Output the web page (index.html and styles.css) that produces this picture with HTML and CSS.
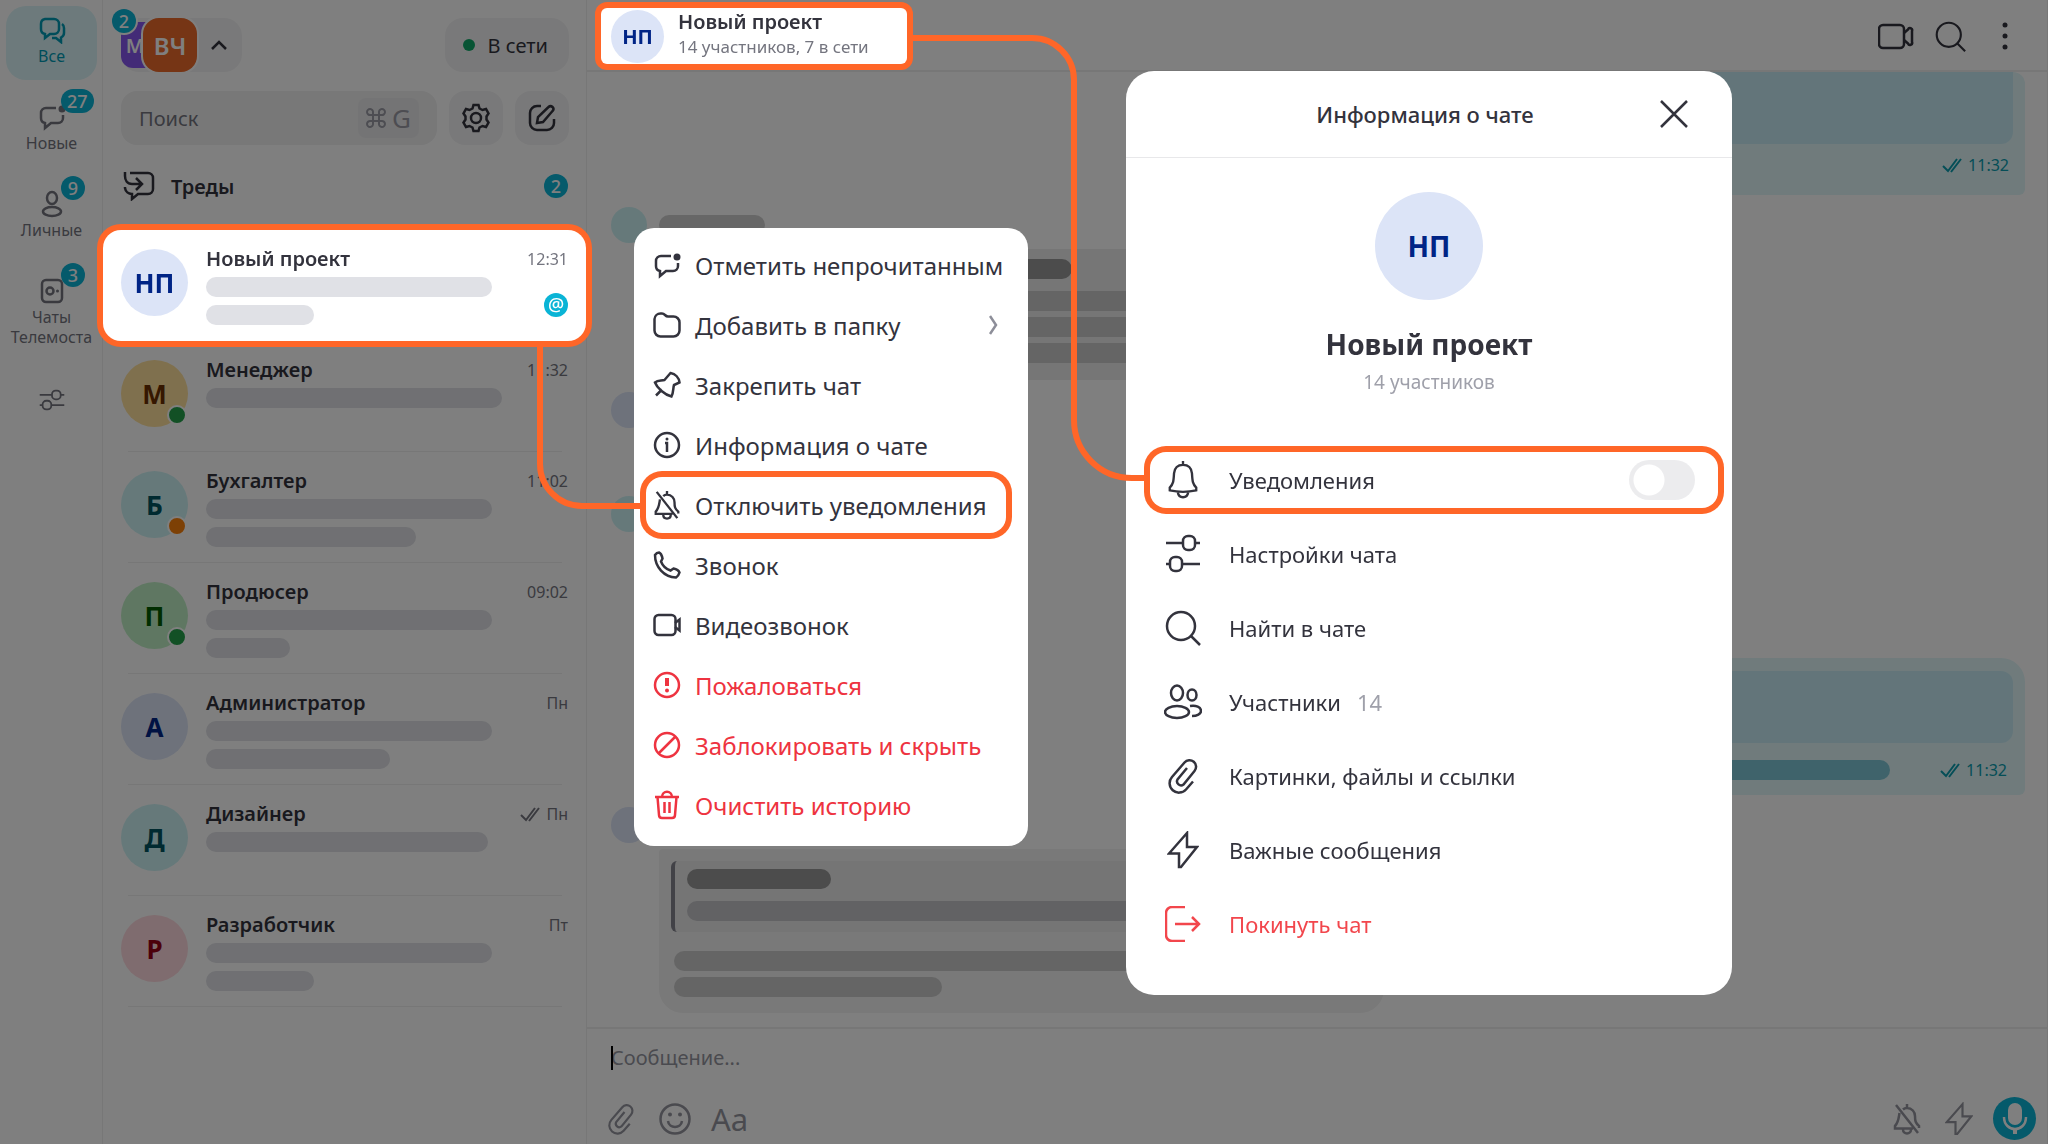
FILE: index.html
```html
<!DOCTYPE html>
<html lang="ru">
  <head>
    <meta charset="utf-8">
    <meta name="viewport" content="width=device-width, initial-scale=1">
    <title>Новый проект</title>
    <link rel="stylesheet" href="styles.css">
  </head>

  <body>

    <!-- icons used more than once -->
    <svg class="sprite" aria-hidden="true">
      <symbol id="i-unread" viewBox="0 0 28 28"><path d="M18 5H8a5 5 0 0 0-5 5v5a5 5 0 0 0 4 5v5l6-5h7a5 5 0 0 0 5-5v-3"/><circle class="fill" cx="24" cy="6" r="3.5"/></symbol>
      <symbol id="i-sliders" viewBox="0 0 36 36"><path d="M1 11h17M30 11h5M1 25h4M17 25h18"/><rect x="18" y="5" width="12" height="12" rx="5"/><rect x="5" y="19" width="12" height="12" rx="5"/></symbol>
      <symbol id="i-search" viewBox="0 0 36 36"><circle cx="16" cy="16" r="14"/><path d="M26 26l9 9"/></symbol>
      <symbol id="i-video" viewBox="0 0 36 28"><rect x="1" y="3" width="25" height="23" rx="4"/><path d="M26 11l4-3.500a2 2 0 0 1 4 1.500v11a2 2 0 0 1-4 1.500L26 18"/></symbol>
      <symbol id="i-clip" viewBox="0 0 32 36"><path d="M20 10L10.500 21.500a4 4 0 0 0 6 5L27.500 13a6.500 6.500 0 0 0-10-8.500L5 19a9.300 9.300 0 0 0 14 12.500l7-8"/></symbol>
      <symbol id="i-bolt" viewBox="0 0 32 38"><path d="M20 2L2 22.500h10V36h2L30 16H20z"/></symbol>
      <symbol id="i-bell-off" viewBox="0 0 28 32"><path d="M14 1v4M10 6.500C11 5.500 12.500 5 14 5c5 0 8 4 8 8 0 5 .500 7 4 10v2M6.500 10C5.500 16 5.500 19.500 2 23v2.500h18M10 26.500c0 2.500 1.800 4 4 4s4-1.500 4-4M3 2l22 28"/></symbol>
      <symbol id="i-checks" viewBox="0 0 20 16"><path d="M1 9l5 5L15 2M9 15L19 2"/></symbol>
    </svg>

    <div class="app">

      <nav class="rail">
        <a class="rail-item active" href="#">
          <svg class="icon" width="28" height="28" viewBox="0 0 28 28"><path d="M7 3h9a5 5 0 0 1 5 5v5a5 5 0 0 1-5 5h-4l-5 4v-4a5 5 0 0 1-4-5V8a5 5 0 0 1 4-5z"/><path d="M24 8c1.500 1 2 2.500 2 4v5c0 2-1 3.500-3 4.500V26l-5-4h-4"/></svg>
          <span>Все</span>
        </a>
        <a class="rail-item" href="#">
          <svg class="icon" width="28" height="28"><use href="#i-unread"/></svg>
          <span>Новые</span>
          <b class="badge">27</b>
        </a>
        <a class="rail-item" href="#">
          <svg class="icon" width="28" height="28" viewBox="0 0 28 28"><ellipse cx="14" cy="8" rx="5" ry="6"/><ellipse cx="14" cy="21.500" rx="9" ry="4.500"/></svg>
          <span>Личные</span>
          <b class="badge">9</b>
        </a>
        <a class="rail-item" href="#">
          <svg class="icon" width="28" height="28" viewBox="0 0 28 28"><rect x="4" y="3" width="20" height="22" rx="4"/><circle cx="12" cy="14" r="3.500"/><circle class="fill" cx="19.500" cy="14" r="1.500"/></svg>
          <span>Чаты<br>Телемоста</span>
          <b class="badge">3</b>
        </a>
        <a class="rail-item" href="#" aria-label="Настройка папок">
          <svg class="icon" width="26" height="28"><use href="#i-sliders"/></svg>
        </a>
      </nav>

      <aside class="sidebar">
        <div class="top-row">
          <button class="accounts" type="button">
            <span class="account second">М</span>
            <span class="account first">ВЧ</span>
            <svg class="icon" width="18" height="12" viewBox="0 0 18 12"><path d="M2 10l7-7 7 7"/></svg>
            <b class="badge">2</b>
          </button>
          <button class="status" type="button"><i class="status-dot"></i>В сети</button>
        </div>

        <div class="search-row">
          <label class="search">
            <input type="text" placeholder="Поиск" aria-label="Поиск">
            <kbd><svg class="icon" width="20" height="20" viewBox="0 0 20 20"><path d="M7 7h6v6H7zM7 7H4.500A3 3 0 1 1 7 4.500zM13 7V4.500A3 3 0 1 1 15.500 7zM13 13h2.500a3 3 0 1 1-2.500 2.500zM7 13v2.500A3 3 0 1 1 4.500 13z"/></svg>G</kbd>
          </label>
          <button class="square" type="button" aria-label="Настройки">
            <svg class="icon" width="30" height="30" viewBox="0 0 30 30"><path d="M12.500 2h5l1 3.500 3 1.500 3.500-1 2.500 4.500-2 3v3l2 3-2.500 4.500-3.500-1-3 1.500-1 3.500h-5l-1-3.500-3-1.500-3.500 1L2.500 19.500l2-3v-3l-2-3L5 6l3.500 1 3-1.500z"/><circle cx="15" cy="15" r="5"/></svg>
          </button>
          <button class="square" type="button" aria-label="Новый чат">
            <svg class="icon" width="28" height="28" viewBox="0 0 28 28"><path d="M13 2H9a7 7 0 0 0-7 7v10a7 7 0 0 0 7 7h10a7 7 0 0 0 7-7v-4"/><path d="M9 19l1-6L20.500 3a2.500 2.500 0 0 1 4 4L15 18z"/></svg>
          </button>
        </div>

        <a class="threads" href="#">
          <svg class="icon" width="32" height="30" viewBox="0 0 32 30"><path d="M7 2h18a5 5 0 0 1 5 5v11a5 5 0 0 1-5 5H15l-6 5v-5a7 7 0 0 1-7-6v-1M2 1v4c0 4 2 8 7 8h10M13 7l6 6-6 6"/></svg>
          <span>Треды</span>
          <b class="badge">2</b>
        </a>

        <ul class="chats">
          <li>
            <a class="chat-row lifted" href="#">
              <span class="avatar blue">НП</span>
              <span class="chat-text">
                <strong>Новый проект</strong>
                <i class="bar w-286"></i>
                <i class="bar w-108"></i>
              </span>
              <span class="chat-meta"><time>12:31</time><b class="badge mention">@</b></span>
            </a>
          </li>
          <li>
            <a class="chat-row" href="#">
              <span class="avatar yellow">М<i class="presence green-dot"></i></span>
              <span class="chat-text">
                <strong>Менеджер</strong>
                <i class="bar w-296"></i>
              </span>
              <span class="chat-meta"><time>11:32</time></span>
            </a>
          </li>
          <li>
            <a class="chat-row" href="#">
              <span class="avatar teal">Б<i class="presence orange-dot"></i></span>
              <span class="chat-text">
                <strong>Бухгалтер</strong>
                <i class="bar w-286"></i>
                <i class="bar w-210"></i>
              </span>
              <span class="chat-meta"><time>11:02</time></span>
            </a>
          </li>
          <li>
            <a class="chat-row" href="#">
              <span class="avatar green">П<i class="presence green-dot"></i></span>
              <span class="chat-text">
                <strong>Продюсер</strong>
                <i class="bar w-286"></i>
                <i class="bar w-84"></i>
              </span>
              <span class="chat-meta"><time>09:02</time></span>
            </a>
          </li>
          <li>
            <a class="chat-row" href="#">
              <span class="avatar blue">А</span>
              <span class="chat-text">
                <strong>Администратор</strong>
                <i class="bar w-286"></i>
                <i class="bar w-184"></i>
              </span>
              <span class="chat-meta"><time>Пн</time></span>
            </a>
          </li>
          <li>
            <a class="chat-row" href="#">
              <span class="avatar teal">Д</span>
              <span class="chat-text">
                <strong>Дизайнер</strong>
                <i class="bar w-282"></i>
              </span>
              <span class="chat-meta"><time><svg class="icon" width="20" height="16"><use href="#i-checks"/></svg>Пн</time></span>
            </a>
          </li>
          <li>
            <a class="chat-row" href="#">
              <span class="avatar red">Р</span>
              <span class="chat-text">
                <strong>Разработчик</strong>
                <i class="bar w-286"></i>
                <i class="bar w-108"></i>
              </span>
              <span class="chat-meta"><time>Пт</time></span>
            </a>
          </li>
        </ul>
      </aside>

      <main class="chat">
        <header class="chat-header">
          <a class="peer lifted" href="#">
            <span class="avatar blue small">НП</span>
            <span class="peer-text">
              <strong>Новый проект</strong>
              <span>14 участников, 7 в сети</span>
            </span>
          </a>
          <div class="header-tools">
            <button type="button" aria-label="Видеозвонок"><svg class="icon" width="36" height="28"><use href="#i-video"/></svg></button>
            <button type="button" aria-label="Поиск"><svg class="icon" width="31" height="31"><use href="#i-search"/></svg></button>
            <button type="button" aria-label="Ещё"><svg class="icon" width="8" height="30" viewBox="0 0 8 30"><circle class="fill" cx="4" cy="4" r="2.500"/><circle class="fill" cx="4" cy="15" r="2.500"/><circle class="fill" cx="4" cy="26" r="2.500"/></svg></button>
          </div>
        </header>

        <section class="messages">
          <div class="out first-out">
            <div class="media"></div>
            <time><svg class="icon" width="20" height="16"><use href="#i-checks"/></svg>11:32</time>
          </div>

          <div class="in">
            <i class="dot-avatar teal"></i>
            <i class="name"></i>
            <div class="bubble lines">
              <i class="line dark w-398"></i>
              <i class="line"></i>
              <i class="line"></i>
              <i class="line"></i>
            </div>
          </div>

          <div class="in">
            <i class="dot-avatar blue"></i>
            <i class="name"></i>
            <div class="bubble short"><i class="line"></i></div>
          </div>

          <div class="in">
            <i class="dot-avatar teal"></i>
            <i class="name"></i>
            <div class="bubble short tall"><i class="line"></i><i class="line"></i></div>
          </div>

          <div class="out">
            <div class="media"></div>
            <div class="caption">
              <i class="line teal-line"></i>
              <time><svg class="icon" width="20" height="16"><use href="#i-checks"/></svg>11:32</time>
            </div>
          </div>

          <div class="in">
            <i class="dot-avatar blue"></i>
            <i class="name"></i>
            <div class="bubble reply">
              <div class="quote">
                <i class="line dark w-144"></i>
                <i class="line"></i>
              </div>
              <i class="line"></i>
              <div class="last-line">
                <i class="line w-268"></i>
                <time>11:32</time>
              </div>
            </div>
          </div>
        </section>

        <footer class="composer">
          <label class="message-field"><input type="text" placeholder="Сообщение..." aria-label="Сообщение"></label>
          <div class="composer-tools">
            <button type="button" aria-label="Прикрепить файл"><svg class="icon" width="28" height="32"><use href="#i-clip"/></svg></button>
            <button type="button" aria-label="Эмодзи"><svg class="icon" width="32" height="32" viewBox="0 0 32 32"><circle cx="16" cy="16" r="14.500"/><path d="M9 18c1 8 13 8 14 0"/><circle class="fill" cx="11" cy="11.500" r="2"/><circle class="fill" cx="21" cy="11.500" r="2"/></svg></button>
            <button class="format" type="button">Aa</button>
            <button class="push" type="button" aria-label="Без звука"><svg class="icon" width="28" height="32"><use href="#i-bell-off"/></svg></button>
            <button type="button" aria-label="Важное"><svg class="icon" width="28" height="34"><use href="#i-bolt"/></svg></button>
            <button class="mic" type="button" aria-label="Голосовое сообщение"><svg class="icon" width="28" height="34" viewBox="0 0 28 34"><rect class="fill" x="7" y="1" width="14" height="22" rx="7"/><path d="M3 15c0 16 22 16 22 0"/><path class="fill" d="M12 26h4v6h-4z"/></svg></button>
          </div>
        </footer>
      </main>

    </div>

    <div class="dim"></div>

    <!-- context menu of the chat row -->
    <div class="menu">
      <button type="button"><svg class="icon" width="28" height="28"><use href="#i-unread"/></svg>Отметить непрочитанным</button>
      <button type="button"><svg class="icon" width="28" height="28" viewBox="0 0 28 28"><path d="M1.500 8a6 6 0 0 1 6-5.500h1.500c3 0 3 3 6 3h5.500a6 6 0 0 1 6 6v8a6 6 0 0 1-6 6h-13a6 6 0 0 1-6-6z"/></svg>Добавить в папку
        <svg class="icon more" width="10" height="20" viewBox="0 0 10 20"><path d="M1 1l6 9-6 9"/></svg></button>
      <button type="button"><svg class="icon" width="28" height="28" viewBox="0 0 28 28"><path d="M17.500 2c5 1 8.500 5 9 9.500L21 14c-1 3-.500 8-2.500 11.500C12 24 4 17 2 11.500c3-2.500 6-1.500 9.500-2.500zM9 18.500l-6 6"/></svg>Закрепить чат</button>
      <button type="button"><svg class="icon" width="28" height="28" viewBox="0 0 28 28"><circle cx="14" cy="14" r="12"/><path d="M12 12h2v9"/><circle class="fill" cx="14" cy="8" r="1.500"/></svg>Информация о чате</button>
      <button class="marked" type="button"><svg class="icon" width="28" height="30"><use href="#i-bell-off"/></svg>Отключить уведомления</button>
      <button type="button"><svg class="icon" width="28" height="28" viewBox="0 0 28 28"><path d="M2 4c1-1.500 2.500-2.500 4-2.500 2.500 1 3 3.500 3.500 6L8 10.500c1.500 4 5 7.500 9.500 9l3-2c2.500.500 5 1.500 6 4-.500 2-1.500 3.500-3.500 5C11 26 2 16 2 4z"/></svg>Звонок</button>
      <button type="button"><svg class="icon" width="28" height="28" viewBox="0 0 28 28"><rect x="1.500" y="4" width="21" height="20" rx="4"/><path d="M22 12l4.500-3.500v11L22 16"/></svg>Видеозвонок</button>
      <button class="danger" type="button"><svg class="icon" width="28" height="28" viewBox="0 0 28 28"><circle cx="14" cy="14" r="12"/><path class="thick" d="M14 7v8"/><circle class="fill" cx="14" cy="19.500" r="2"/></svg>Пожаловаться</button>
      <button class="danger" type="button"><svg class="icon" width="28" height="28" viewBox="0 0 28 28"><circle cx="14" cy="14" r="12"/><path d="M6 22L22 6"/></svg>Заблокировать и скрыть</button>
      <button class="danger" type="button"><svg class="icon" width="28" height="30" viewBox="0 0 28 30"><path d="M2 7h24M9 7c0-7 10-7 10 0M4.500 7l1.500 18c0 2 1 3 3 3h10c2 0 3-1 3-3l1.500-18M11.500 12v11M16.500 12v11"/></svg>Очистить историю</button>
    </div>

    <!-- chat info -->
    <section class="dialog" role="dialog" aria-labelledby="dialog-title">
      <header>
        <h2 id="dialog-title">Информация о чате</h2>
        <button class="close" type="button" aria-label="Закрыть"><svg class="icon" width="28" height="28" viewBox="0 0 28 28"><path d="M1 1l26 26M27 1L1 27"/></svg></button>
      </header>
      <div class="profile">
        <span class="avatar blue large">НП</span>
        <h1>Новый проект</h1>
        <p>14 участников</p>
      </div>
      <div class="options">
        <label class="option marked">
          <svg class="icon" width="34" height="40" viewBox="0 0 36 42"><path d="M18 1v4M18 5c-6 0-9 4-9.500 9C8 22 8 25 4 29v3c9 2 19 2 28 0v-3c-4-4-4-7-4.500-15C27 9 24 5 18 5zM12.500 34c1 7 10 7 11 0"/></svg>
          <span>Уведомления</span>
          <input class="toggle" type="checkbox">
        </label>
        <button class="option" type="button"><svg class="icon" width="36" height="40" viewBox="0 0 36 40"><path d="M1 9h17M30 9h5M1 30h4M17 30h18"/><rect x="18" y="2" width="12" height="14" rx="5"/><rect x="5" y="23" width="12" height="14" rx="5"/></svg><span>Настройки чата</span></button>
        <button class="option" type="button"><svg class="icon" width="36" height="36"><use href="#i-search"/></svg><span>Найти в чате</span></button>
        <button class="option" type="button">
          <svg class="icon" width="38" height="36" viewBox="0 0 38 36"><ellipse cx="13" cy="9" rx="6" ry="7.500"/><ellipse cx="13" cy="28" rx="12" ry="6"/><ellipse cx="28" cy="11" rx="4.500" ry="5.500"/><path d="M26 22c6-1 11 1 11 5 0 3-4 5-9 5"/></svg>
          <span>Участники</span><em>14</em></button>
        <button class="option" type="button"><svg class="icon" width="32" height="36"><use href="#i-clip"/></svg><span>Картинки, файлы и ссылки</span></button>
        <button class="option" type="button"><svg class="icon" width="32" height="38"><use href="#i-bolt"/></svg><span>Важные сообщения</span></button>
        <button class="option leave" type="button"><svg class="icon" width="36" height="36" viewBox="0 0 36 36"><path d="M20 1H7a6 6 0 0 0-6 6v22a6 6 0 0 0 6 6h13M10 18h24M27 11l7 7-7 7"/></svg><span>Покинуть чат</span></button>
      </div>
    </section>

    <!-- lines from the highlighted items to their panels -->
    <svg class="links" width="1200" height="600" aria-hidden="true">
      <path d="M540 346V464a42 42 0 0 0 42 42H642"/>
      <path d="M911 38H1032a42 42 0 0 1 42 42V420a58 58 0 0 0 58 58H1146"/>
    </svg>

  </body>
</html>
```
FILE: styles.css
```css
:root
{
  --orange: #ff6628;
  --teal: #0ab4d6;
  --text: #33333d;
  --grey: #74757f;
  --line: #eeeeef;
}

* {
  box-sizing: border-box;
}

body {
  margin: 0;
  font-family: "Noto Sans", "Open Sans", sans-serif;
  font-size: 20px;
  color: var(--text);
  background: #fff;
}

a {
  color: inherit;
  text-decoration: none;
}

button, input {
  font: inherit;
  color: inherit;
  border: none;
  background: none;
  padding: 0;
  margin: 0;
}

button {
  cursor: pointer;
}

ul {
  list-style: none;
  margin: 0;
  padding: 0;
}

.sprite {
  display: none;
}

.icon {
  flex: none;
  fill: none;
  stroke: currentColor;
  stroke-width: 2.5;
}

.fill {
  fill: currentColor;
  stroke: none;
}

.thick {
  stroke-width: 4;
}

.app {
  display: grid;
  grid-template-columns: 103px 484px 1fr;
  grid-template-rows: 100%;
  height: 100vh;
}

/* grey shade over the app, the lifted items stay above it */
.dim {
  position: fixed;
  inset: 0;
  background: rgba(0, 0, 0, 0.5);
  z-index: 1;
}

.lifted {
  position: relative;
  z-index: 2;
  background: #fff;
  box-shadow: 0 0 0 6px var(--orange);
}

.badge {
  min-width: 24px;
  height: 24px;
  padding: 0 6px;
  border-radius: 12px;
  background: var(--teal);
  color: #fff;
  font-size: 18px;
  font-weight: 500;
  line-height: 24px;
  text-align: center;
}

/* left rail */
.rail {
  display: flex;
  flex-direction: column;
  gap: 13px;
  padding: 6px;
  border-right: 1px solid var(--line);
}

.rail-item {
  position: relative;
  display: flex;
  flex-direction: column;
  align-items: center;
  gap: 2px;
  width: 91px;
  min-height: 74px;
  padding-top: 10px;
  border-radius: 20px;
  color: var(--grey);
  font-size: 16px;
  line-height: 20px;
  text-align: center;
  white-space: nowrap;
}

.rail-item.active {
  background: #daf5f8;
  color: #009bb5;
}

.rail-item:last-child {
  margin-top: 16px;
}

.rail-item .badge {
  position: absolute;
  left: 55px;
  top: -4px;
}

/* list of chats */
.sidebar {
  border-right: 1px solid var(--line);
}

.top-row {
  display: flex;
  justify-content: space-between;
  padding: 18px 17px 19px 18px;
}

.accounts {
  position: relative;
  display: flex;
  align-items: center;
  width: 121px;
  height: 54px;
  border-radius: 18px;
  background: #f3f3f4;
}

.account {
  display: grid;
  place-items: center;
  color: #fff;
  font-weight: 600;
}

.account.first {
  width: 54px;
  height: 54px;
  margin-left: -24px;
  border-radius: 16px;
  box-shadow: 0 0 0 2px #fff;
  background: #ec6a2a;
  font-size: 24px;
  z-index: 0;
}

.account.second {
  width: 46px;
  height: 46px;
  padding-right: 18px;
  border-radius: 12px;
  background: #8757ee;
}

.accounts .icon {
  margin-left: 13px;
}

.accounts .badge {
  position: absolute;
  left: -9px;
  top: -9px;
  box-shadow: 0 0 0 2px #fff;
}

.status {
  display: flex;
  align-items: center;
  gap: 13px;
  height: 54px;
  padding: 0 21px 0 18px;
  border-radius: 18px;
  background: #f3f3f4;
}

.status-dot {
  width: 12px;
  height: 12px;
  border-radius: 50%;
  background: #0fa968;
}

.search-row {
  display: grid;
  grid-template-columns: minmax(0, 1fr) 54px 54px;
  gap: 12px;
  padding: 0 17px 0 18px;
}

.search {
  display: flex;
  align-items: center;
  height: 54px;
  padding: 0 18px;
  border-radius: 16px;
  background: #f0f0f1;
}

.search input {
  flex: 1;
  min-width: 0;
}

.search input::placeholder {
  color: var(--grey);
  opacity: 1;
}

.search kbd {
  display: flex;
  align-items: center;
  gap: 6px;
  height: 40px;
  padding: 0 8px;
  border-radius: 8px;
  background: #e9e9eb;
  color: #9a9ba5;
  font: inherit;
  font-size: 26px;
}

.search kbd .icon {
  stroke-width: 2;
}

.square {
  display: grid;
  place-items: center;
  height: 54px;
  border-radius: 16px;
  background: #f3f3f4;
}

.threads {
  display: flex;
  align-items: center;
  gap: 16px;
  height: 85px;
  padding: 0 18px 3px 20px;
  font-weight: 600;
}

.threads .badge {
  margin-left: auto;
}

.chat-row {
  display: flex;
  height: 111px;
  padding: 19px 18px 0;
}

.chat-row.lifted {
  border-radius: 18px;
}

.chats li + li {
  background: linear-gradient(var(--line), var(--line)) center bottom / 434px 1px no-repeat;
}

.avatar {
  position: relative;
  display: grid;
  place-items: center;
  flex: none;
  width: 67px;
  height: 67px;
  border-radius: 50%;
  font-size: 26px;
  font-weight: 700;
}

.blue {
  background: #dce4f7;
  color: #002486;
}

.yellow {
  background: #ffe09c;
  color: #6b2e00;
}

.teal {
  background: #cdf3f5;
  color: #005560;
}

.green {
  background: #bfefc5;
  color: #005c00;
}

.red {
  background: #ffd9de;
  color: #980016;
}

.presence {
  position: absolute;
  right: 1px;
  bottom: 2px;
  width: 20px;
  height: 20px;
  border: 2px solid #fff;
  border-radius: 50%;
}

.green-dot {
  background: #24a14b;
}

.orange-dot {
  background: #fa810b;
}

.chat-text {
  flex: 1;
  display: flex;
  flex-direction: column;
  gap: 8px;
  margin-left: 18px;
}

.chat-text strong, .peer-text strong {
  font-weight: 600;
  line-height: 20px;
}

.bar {
  height: 20px;
  border-radius: 10px;
  background: #e0e1e6;
}

.chat-meta {
  display: flex;
  flex-direction: column;
  align-items: flex-end;
  justify-content: space-between;
  height: 68px;
  color: var(--grey);
  font-size: 16px;
  line-height: 20px;
}

.chat-meta time {
  display: flex;
  align-items: center;
  gap: 6px;
}

.chat-meta .icon {
  stroke-width: 2;
}

.mention {
  padding: 0;
  line-height: 22px;
}

.w-84 { width: 84px; }
.w-108 { width: 108px; }
.w-144 { width: 144px; }
.w-184 { width: 184px; }
.w-210 { width: 210px; }
.w-268 { width: 268px; }
.w-282 { width: 282px; }
.w-286 { width: 286px; }
.w-296 { width: 296px; }
.w-398 { width: 398px; }

/* conversation */
.chat {
  display: flex;
  flex-direction: column;
  min-width: 0;
  border-right: 1px solid var(--line);
}

.chat-header {
  display: flex;
  justify-content: space-between;
  align-items: center;
  height: 72px;
  padding: 2px 38px 0 14px;
  border-bottom: 2px solid var(--line);
}

.peer {
  display: flex;
  align-items: center;
  gap: 14px;
  height: 56px;
  width: 306px;
  padding-left: 10px;
  border-radius: 6px;
}

.avatar.small {
  width: 53px;
  height: 53px;
  font-size: 20px;
}

.peer-text {
  display: flex;
  flex-direction: column;
  gap: 4px;
  padding-bottom: 2px;
}

.peer-text span {
  color: var(--grey);
  font-size: 17px;
  line-height: 22px;
}

.header-tools {
  display: flex;
  align-items: center;
  gap: 21px;
}

.header-tools button {
  display: flex;
}

.header-tools button:last-child {
  margin-left: 14px;
}

.messages {
  flex: 1;
  display: flex;
  flex-direction: column;
  gap: 12px;
  padding: 0 22px 13px 24px;
  overflow: hidden;
}

.in {
  display: grid;
  grid-template-columns: 36px 725px;
  grid-template-rows: 36px auto;
  gap: 6px 12px;
}

.dot-avatar {
  width: 36px;
  height: 36px;
  border-radius: 50%;
}

.name {
  align-self: center;
  width: 106px;
  height: 20px;
  border-radius: 10px;
  background: #cfcfcf;
}

.bubble {
  grid-column: 2;
  padding: 12px 12px 16px;
  border-radius: 4px 24px 24px 24px;
  background: #f2f2f2;
}

.line {
  display: block;
  height: 20px;
  border-radius: 10px;
  background: #cbcbcb;
}

.line.dark {
  background: #989898;
}

.lines {
  display: grid;
  gap: 6px;
  padding: 10px 15px 17px;
  background: #ededed;
}

.lines .dark {
  margin-bottom: 6px;
}

.short {
  width: 300px;
  height: 50px;
}

.short.tall {
  display: grid;
  height: 108px;
}

.quote {
  display: grid;
  gap: 12px;
  margin-bottom: 19px;
  padding: 8px 12px 11px;
  border-left: 4px solid #85858f;
  border-radius: 6px;
  background: #ebebeb;
}

.quote .line + .line {
  background: #c4c4c8;
}

.reply > .line {
  margin: 0 3px 6px;
}

.last-line {
  display: flex;
  justify-content: space-between;
  padding: 0 3px;
  color: var(--grey);
  font-size: 16px;
  line-height: 20px;
}

.out {
  align-self: flex-end;
  width: 725px;
  height: 137px;
  padding: 13px 12px 0;
  border-radius: 24px 24px 6px 24px;
  background: #e0f7f9;
}

.out.first-out {
  height: 123px;
  padding-top: 0;
  border-radius: 0 12px 6px 24px;
}

.media {
  height: 72px;
  border-radius: 12px;
  background: #c7ebf5;
}

.out time {
  display: flex;
  justify-content: flex-end;
  align-items: center;
  gap: 6px;
  padding: 9px 4px 0;
  color: #0a9cae;
  font-size: 16px;
  line-height: 24px;
}

.out .icon {
  stroke-width: 2;
}

.caption {
  display: flex;
  justify-content: space-between;
  padding-top: 5px;
}

.teal-line {
  width: 578px;
  margin-top: 12px;
  background: #7ec7d6;
}

.caption time {
  padding: 10px 6px 0;
}

.first-out .media {
  border-radius: 0 0 12px 12px;
}

.composer {
  display: flex;
  flex: none;
  flex-direction: column;
  justify-content: space-between;
  height: 117px;
  padding: 14px 11px 4px 20px;
  border-top: 2px solid var(--line);
  color: var(--grey);
}

.message-field {
  position: relative;
  margin-left: 4px;
}

/* text cursor */
.message-field::before {
  content: "";
  position: absolute;
  left: 0;
  top: 3px;
  width: 2px;
  height: 24px;
  background: #000;
}

.message-field input {
  width: 100%;
  height: 28px;
}

.message-field input::placeholder {
  color: #94959e;
  opacity: 1;
}

.composer-tools {
  display: flex;
  align-items: center;
  gap: 24px;
  color: #94959e;
}

.composer-tools button {
  display: flex;
}

.composer-tools .format {
  margin-left: -4px;
  font-size: 31px;
  line-height: 40px;
}

.push {
  margin-left: auto;
}

.composer-tools .mic {
  display: grid;
  place-items: center;
  width: 43px;
  height: 43px;
  margin-left: -4px;
  border-radius: 50%;
  background: var(--teal);
  color: #fff;
}

/* panels above the shade */
.menu {
  position: absolute;
  left: 634px;
  top: 228px;
  z-index: 3;
  display: flex;
  flex-direction: column;
  gap: 4px;
  width: 394px;
  padding: 9px 22px 13px 12px;
  border-radius: 20px;
  background: #fff;
}

.menu button {
  display: flex;
  align-items: center;
  gap: 14px;
  height: 56px;
  padding: 0 7px;
  border-radius: 16px;
  font-size: 24px;
  white-space: nowrap;
}

.menu .more {
  margin-left: auto;
  color: #8d8e99;
}

.marked {
  box-shadow: 0 0 0 6px var(--orange);
}

.menu .danger {
  color: #ee3340;
}

.dialog {
  position: absolute;
  left: 1126px;
  top: 71px;
  z-index: 3;
  width: 606px;
  padding-bottom: 43px;
  border-radius: 28px;
  background: #fff;
}

.dialog header {
  display: grid;
  grid-template-columns: 64px 1fr 72px;
  align-items: center;
  height: 87px;
  border-bottom: 1px solid #e8e8ea;
}

.dialog h2 {
  grid-column: 2;
  margin: 0;
  font-size: 22px;
  font-weight: 500;
  text-align: center;
}

.close {
  display: flex;
}

.profile {
  display: flex;
  flex-direction: column;
  align-items: center;
  padding-top: 34px;
}

.avatar.large {
  width: 108px;
  height: 108px;
  font-size: 28px;
}

.profile h1 {
  margin: 24px 0 0;
  font-size: 28px;
  font-weight: 700;
  line-height: 40px;
}

.profile p {
  margin: 4px 0 0;
  color: #9fa0aa;
  font-size: 19px;
  line-height: 28px;
}

.options {
  display: flex;
  flex-direction: column;
  gap: 18px;
  padding: 56px 14px 0 24px;
}

.option {
  display: grid;
  grid-template-columns: 38px auto auto 1fr;
  align-items: center;
  height: 56px;
  padding: 0 23px 0 14px;
  border-radius: 16px;
  font-size: 22px;
  text-align: left;
}

.option .icon {
  justify-self: center;
}

.option span {
  margin-left: 27px;
}

.option em {
  margin-left: 16px;
  color: #9fa0aa;
  font-style: normal;
}

.option.leave {
  color: #f2464c;
}

.toggle {
  grid-column: 4;
  justify-self: end;
  appearance: none;
  width: 66px;
  height: 40px;
  border-radius: 20px;
  background: radial-gradient(circle at 20px 20px, #fff 15px, #ececee 16px);
}

.toggle:checked {
  background: radial-gradient(circle at 46px 20px, #fff 15px, var(--teal) 16px);
}

.links {
  position: absolute;
  left: 0;
  top: 0;
  z-index: 4;
  fill: none;
  stroke: var(--orange);
  stroke-width: 6;
  pointer-events: none;
}
```
